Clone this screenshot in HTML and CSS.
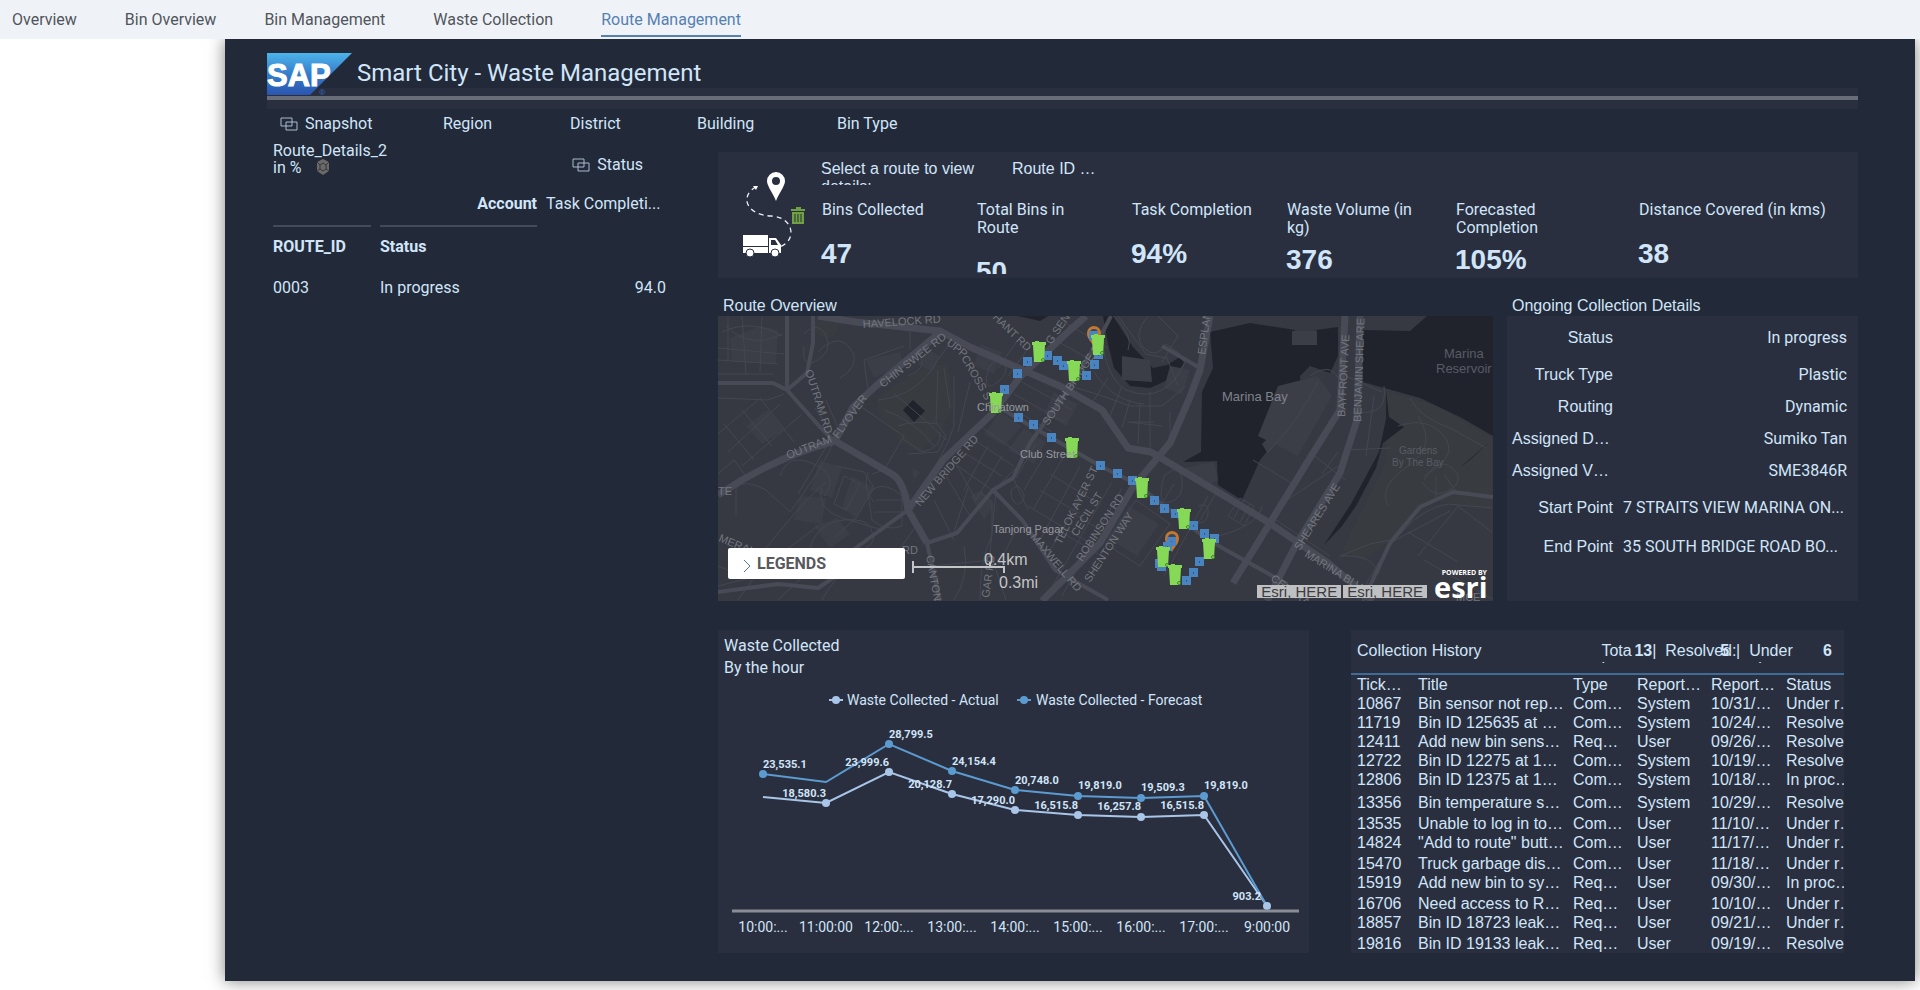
FILE: index.html
```html
<!DOCTYPE html>
<html lang="en">

<head>
    <meta charset="UTF-8">
    <title>Smart City - Waste Management</title>
    <link rel="stylesheet" href="styles.css">
</head>

<body>

    <nav class="tabs">
        <a href="#overview">Overview</a>
        <a href="#bin-overview">Bin Overview</a>
        <a href="#bin-management">Bin Management</a>
        <a href="#waste-collection">Waste Collection</a>
        <a href="#route-management" class="active">Route Management</a>
    </nav>

    <main class="board">

        <header class="board-header">
            <svg class="logo" viewBox="0 0 86 43" role="img" aria-label="SAP">
                <defs>
                    <linearGradient id="sapBlue" x1="0" y1="0" x2="0" y2="1">
                        <stop offset="0" stop-color="#4db4ea" />
                        <stop offset="0.5" stop-color="#357dcb" />
                        <stop offset="1" stop-color="#2a55b0" />
                    </linearGradient>
                </defs>
                <path d="M0 0H85L43 42H0z" fill="url(#sapBlue)" />
                <text class="logo-text" x="0" y="33">SAP</text>
                <text class="logo-mark" x="52" y="42">®</text>
            </svg>
            <h1>Smart City - Waste Management</h1>
        </header>

        <div class="filters">
            <button type="button">
                <svg class="link-icon" viewBox="0 0 18 14"><path d="M1 1h11v8H1zM6 5h11v8H6z" /></svg>Snapshot
            </button>
            <button type="button">Region</button>
            <button type="button">District</button>
            <button type="button">Building</button>
            <button type="button">Bin Type</button>
        </div>

        <div class="content">

            <section class="routes">
                <div class="routes-head">
                    <h2>Route_Details_2<br>in %
                        <svg class="cube-icon" viewBox="0 0 14 16">
                            <path d="M7 0l6 3v9l-6 4-6-4V3z" fill="#6b6a68" />
                            <path d="M7 4l3 2v4l-3 2-3-2V6zM1 3l3 3M13 3l-3 3M1 12l3-2M13 12l-3-2" fill="none" stroke="#34373f" />
                        </svg>
                    </h2>
                    <button type="button">
                        <svg class="link-icon" viewBox="0 0 18 14"><path d="M1 1h11v8H1zM6 5h11v8H6z" /></svg>Status
                    </button>
                </div>
                <table class="route-table">
                    <colgroup>
                        <col class="col-id">
                        <col class="col-status">
                        <col>
                    </colgroup>
                    <tr>
                        <th colspan="2" class="account">Account</th>
                        <td>Task Completi...</td>
                    </tr>
                    <tr class="ruled">
                        <th>ROUTE_ID</th>
                        <th>Status</th>
                        <td></td>
                    </tr>
                    <tr>
                        <td>0003</td>
                        <td>In progress</td>
                        <td class="num">94.0</td>
                    </tr>
                </table>
            </section>

            <div class="main-col">

                <section class="kpis">
                    <svg class="route-art" viewBox="0 0 70 94">
                        <path d="M17 18C1 26 6 46 32 47c24 1 26 26 8 31" fill="none" stroke="#eceef2" stroke-width="1.3" stroke-dasharray="5 4" />
                        <path d="M14 17l5 0-2 4z" fill="#fff" />
                        <path fill-rule="evenodd" fill="#fff" d="M37 3a9 9 0 0 1 9 9c0 5-6 12-9 20-3-8-9-15-9-20a9 9 0 0 1 9-9zm0 5a4 4 0 1 0 0 8 4 4 0 0 0 0-8z" />
                        <path fill="#6fa043" d="M52 40h5v-2h5v2h4v2H52zM53 43h12v12H53z" />
                        <path d="M56 45v8M59 45v8M62 45v8" stroke="#2a2f3f" />
                        <path fill="#fff" d="M4 66h25v11H4zM4 78h25v6H4zM30 69h7l5 7v8H30z" />
                        <path fill="#2a2f3f" d="M32 71h4l3 5h-7z" />
                        <circle cx="11" cy="84" r="4" fill="#fff" stroke="#2a2f3f" />
                        <circle cx="36" cy="84" r="4" fill="#fff" stroke="#2a2f3f" />
                    </svg>
                    <div class="kpi-body">
                        <div class="kpi-hint">
                            <p>Select a route to view details:</p>
                            <p>Route ID …</p>
                        </div>
                        <dl class="kpi-list">
                            <div class="kpi">
                                <dt>Bins Collected</dt>
                                <dd>47</dd>
                            </div>
                            <div class="kpi">
                                <dt>Total Bins in Route</dt>
                                <dd>50</dd>
                            </div>
                            <div class="kpi">
                                <dt>Task Completion</dt>
                                <dd>94%</dd>
                            </div>
                            <div class="kpi two-line">
                                <dt>Waste Volume (in kg)</dt>
                                <dd>376</dd>
                            </div>
                            <div class="kpi two-line">
                                <dt>Forecasted Completion</dt>
                                <dd>105%</dd>
                            </div>
                            <div class="kpi">
                                <dt>Distance Covered (in kms)</dt>
                                <dd>38</dd>
                            </div>
                        </dl>
                    </div>
                </section>

                <div class="map-row">
                    <section class="map-box">
                        <h2>Route Overview</h2>
                        <div class="map">
                            <svg class="map-svg" viewBox="0 0 775 285" preserveAspectRatio="xMidYMid slice">
                                <defs>
                                    <g id="bin">
                                        <path d="M-7-10h3v-1h4v1h7v3h-1l-1 17h-10l-1-17h-1z" fill="#86d957" />
                                        <circle cx="4" cy="8" r="1.5" fill="none" stroke="#3d8a2c" />
                                    </g>
                                    <g id="stop">
                                        <rect x="-5" y="-5" width="9" height="9" fill="#4a84c0" />
                                        <path d="M-1-1h1v2h-1z" fill="#2a5a96" />
                                    </g>
                                    <g id="pin">
                                        <path d="M0 13C-3 7-7 5-7-1a7 7 0 0 1 14 0c0 6-4 8-7 14z" fill="#c4772f" />
                                        <circle cy="-1" r="4" fill="#3c4657" />
                                    </g>
                                </defs>

                                <!-- parks -->
                                <path class="park" d="M160 80l48-30 22-2 6 40-14 30-20 18-20-10-22-30z" />
                                <circle class="park" cx="108" cy="10" r="12" />
                                <path class="park" d="M669 75l50 15 55 32v70l-60-8-40 40-30 20-20-10 20-40 25-50z" />

                                <!-- water -->
                                <path class="water" d="M492 16l40-9 45 7v15h21V14l22-3v29l-8 17-20-7-10 10 2 21-15 30-27 33-18 40-24-15-1-24-34 1 18-10 1-60 11-24z" />
                                <path class="water" d="M645 14l47 1 17-15h66v120l-33-19-40-19-57-16z" />
                                <path class="water" d="M385 0h10l20 31 20 21 14-3 13-8 4 6-10 14-24 11-20-2-16-18-6-24z" />
                                <path class="water" d="M300 0h30l-8 5zM668 75l3 26 15 10-21 16-7 25-20 38-14 20-18 19 27-41 28-52 7-33z" />
                                <path class="water" d="M774 124l-20 18-12 10 4-4 14-12z" />
                                <path class="water" d="M195 84l12 11-11 11-11-12z" />

                                <!-- blocks -->
                                <g class="block">
                                    <path d="M12 22l30-12 18 4-2 34-44-2zM102 144l22 8-10 30-22-8zM134 160l22 12-18 30-14-10zM262 28l22 8-8 22-20-8zM148 44l34-8 4 12-30 14z" />
                                    <path d="M282 96l22 14-18 20-20-12zM306 112l22 14-12 22-26-14zM336 76l24 12-12 22-22-12zM404 40l28 4 2 22-30-2zM452 50l20 4-8 24-18-6z" />
                                    <path d="M411 190l30 18-22 32-30-18zM96 210l24-8 12 16-20 14zM28 110l22-16 16 20-22 14zM252 180l12-6 12 16-10 14z" />
                                    <path d="M560 70l40-10 14 20-34 60-40-20zM574 15h25v14h-25zM544 128l8-8 8 6-10 12zM572 88l4-6 6 6-6 8z" />
                                    <path d="M466 152l30-6 4 18-14 8zM82 180l26 2-4 26-28-4zM194 152l8 4-6 8zM200 48l10-14 12 6-8 16z" />
                                </g>

                                <!-- minor streets -->
                                <g class="street">
                                    <path d="M0 32l66 6M0 58h56M0 82l50 2 16-6M10 0v44M24 0l4 58M44 0l-2 56M4 16q30-14 60 4M8 10q24 24 56 8M0 44l60 4" />
                                    <path d="M0 118l40-34M10 136l52-48M24 150l60-52M6 108l30 36M24 94l30 36M42 82l34 44M0 158l16-14 12 16" />
                                    <path d="M18 200v-28q8-10 30 2l24 22M72 196q30-40 44-70M48 232q40-50 60-66M80 178l30-50M104 172q-6 20 20 30l40 12" />
                                    <path d="M62 160q8-24 34-12t10 32M118 150l28 6 10 16-18 30-22 20M126 160l16 8-14 26-12-6z" />
                                    <path d="M92 232q8-26 34-28t28 12q6 14-16 20M60 240l40-30M20 284l24-34 40-6M60 284l30-28M104 284q20-40 60-34" />
                                    <path d="M150 178q14-16 34 2v30q-16 6-30-6zM158 184h26M156 196h28M150 156q-6 18 6 30M198 210l-24 34" />
                                    <path d="M142 90l44 30-20 34-12 4M117 122l-20-30M108 84l12 28M86 18q14-14 22 2t-12 26q-12 6-10-16M100 36q20-20 32-4t-10 30" />
                                    <path d="M146 44l4 30M146 44l40-14M190 60q20-8 12-20M192 16v18M160 84q40-4 60-40l10-14M166 94q30 10 50 36M220 54l-2 52 10 14-8 16-30 2" />
                                    <path d="M176 78q30 24 52 46M180 110q16-6 40-2M184 122l20 14q20-4 18-20M236 60v50q-10 30-32 60M226 52l6 40" />
                                    <path d="M252 66l-12 50M262 110l40 28M256 124l40 26M248 138l36 22M240 150l34 24M290 90l44 26M296 78l50 28M304 66l50 28M312 56l54 30" />
                                    <path d="M228 160l24 40M238 148l20 36M216 184l20 40M234 222l16-50M270 130l-24 44M284 140l-26 44M300 150l-20 20" />
                                    <path d="M262 176l12 10v34q-12 20-12 64M278 176l-6 60 16 48M296 164l14 30M246 230q6 30-10 54M214 250l60-6M300 210l-20 40" />
                                    <path d="M300 170q10 10 4 16t-10-4 6-12M272 50q8-10 14-2t-6 18-12-4zM318 128l-20 34M330 134l-24 40M346 140l-30 52M362 150l-40 74M376 160l-46 78" />
                                    <path d="M394 166l-64 112M404 172l-60 108M322 174l40 24M332 158l46 28M310 190l60 36M356 198l30 18M340 214l40 24" />
                                    <path d="M330 20l50 28M320 32l50 30M300 24l-20 28M312 30l-22 30M346 6l44 26M352 70q34 10 60 20h32l24-20M376 56q20 30 50 32" />
                                    <path d="M344 84l20-34M372 90l18-28M392 100l12-30M404 112l8-28M420 128l2-40M412 106h24M432 134V76M444 110l-34-4M452 126V96" />
                                    <path d="M384 22q4 40 24 52 40 16 60-30M448 40l12 30M400 0l28 38 20 4M430 0q-16 20-4 32t22-4l14 10M440 0l20 20-16 26M396 0q20 20 14 34" />
                                    <path d="M446 160q16-14 18 4t-12 22-6-26M418 184l34 24-30 42-34-22zM456 168l-16 26M500 174l-24 40M490 180l-44 80M480 190q12-4 10 8t-14 8" />
                                    <path d="M535 144l40 24M597 140l30 24M620 136l-16 22M552 200l60 40M560 190l60-40M628 134l44-2M536 190l-14-8-12 18 16 10 10-20M526 184l-10 18M532 188l-10 18M500 220q40-10 44-30" />
                                    <path d="M592 60q20-14 28 2M640 96q30 4 26-26M628 60l36 16M600 66q-20 40-50 70M656 80l-8 60M706 164q14-24 28-12t-2 22-28-8M726 158l12 18M718 160v24" />
                                    <path d="M622 240l30-12 20-4-12 34q-4-20-38-18M672 227l60-32M700 240l40-50 34 26M706 244l70 40M640 284q44-90 90-96l44 4M690 216l50 30" />
                                    <path d="M0 270l40-10M0 250l30 12M700 100q20 30-10 50t-20 40M680 110q30-10 46 10t-20 40M692 82q10 20 40 30l36 20" />
                                </g>

                                <!-- main roads -->
                                <g class="road">
                                    <path d="M69 0v74l33 37 15 15M95 0v27l-6 30-20 17M0 67h55l14 7" />
                                    <path d="M209 227l30-10 36-43 20-12 17-35 40-56 27-44 14-27M275 174l30 31 32 49 53 30" />
                                    <path d="M280 91l104 60 33 16 73 57 79 44M209 227l13 58M190 194l-51 37-40 30M0 276l60-8 40 4 30-20" />
                                    <path d="M444 30l38 22M672 227l-27 58M775 181l-40-5-33 15-30 36" />
                                </g>
                                <g class="road wide">
                                    <path d="M100 0l38 6 84 9 30 16 92 40 40 23 26 38 23 4 117 70 60 41 45 38" />
                                    <path d="M225 14l-66 55-24 22-18 34q-60 16-117 54" />
                                    <path d="M117 125l55 32q14 6 18 37l19 33M190 194l35-50 50-47 27-36 50-47 16-14" />
                                    <path d="M492 0l-10 54-10 27-20 46-37 44-33 56-58 58" />
                                    <path d="M642 0l-3 104-17 53-43 70-30 58M627 0l-5 94-27 43-43 70-37 60" />
                                </g>

                                <!-- street names -->
                                <g class="street-name">
                                    <text transform="translate(145 12) rotate(-4)">HAVELOCK RD</text>
                                    <text transform="translate(165 72) rotate(-38)">CHIN SWEE RD</text>
                                    <text transform="translate(87 55) rotate(72)">OUTRAM RD</text>
                                    <text transform="translate(70 143) rotate(-21)">OUTRAM</text>
                                    <text transform="translate(120 123) rotate(-54)">FLYOVER</text>
                                    <text transform="translate(202 191) rotate(-49)">NEW BRIDGE RD</text>
                                    <text transform="translate(228 28) rotate(38)">UPP</text>
                                    <text transform="translate(243 42) rotate(60)">CROSS ST</text>
                                    <text transform="translate(274 2) rotate(44)">HANT RD</text>
                                    <text transform="translate(333 29) rotate(-55)">G SENG</text>
                                    <text transform="translate(330 110) rotate(-56)">SOUTH BRIDGE RD</text>
                                    <text transform="translate(343 229) rotate(-64)">TELOK AYER ST</text>
                                    <text transform="translate(359 221) rotate(-58)">CECIL ST</text>
                                    <text transform="translate(364 246) rotate(-57)">ROBINSON RD</text>
                                    <text transform="translate(372 267) rotate(-57)">SHENTON WAY</text>
                                    <text transform="translate(312 221) rotate(50)">MAXWELL RD</text>
                                    <text transform="translate(208 240) rotate(80)">CANTON</text>
                                    <text transform="translate(271 282) rotate(-82)">GAR RD</text>
                                    <text transform="translate(0 225) rotate(22)">MERAH</text>
                                    <text x="184" y="238">RD</text>
                                    <text x="0" y="179">TE</text>
                                    <text transform="translate(487 39) rotate(-82)">ESPLAN</text>
                                    <text transform="translate(627 101) rotate(-87)">BAYFRONT AVE</text>
                                    <text transform="translate(643 106) rotate(-88)">BENJAMIN SHEARE</text>
                                    <text transform="translate(582 235) rotate(-58)">SHEARES AVE</text>
                                    <text transform="translate(586 240) rotate(32)">MARINA BLV</text>
                                    <text transform="translate(552 264) rotate(36)">CENTRAL</text>
                                    <text x="738" y="285">MCE</text>
                                </g>
                                <g class="water-name">
                                    <text x="504" y="85">Marina Bay</text>
                                    <text class="faint" x="726" y="42">Marina</text>
                                    <text class="faint" x="718" y="57">Reservoir</text>
                                    <text class="faint small" x="681" y="138">Gardens</text>
                                    <text class="faint small" x="674" y="150">By The Bay</text>
                                </g>

                                <!-- route -->
                                <use href="#pin" x="376" y="18" />
                                <use href="#pin" x="454" y="223" />
                                <use href="#stop" x="330" y="40" />
                                <use href="#stop" x="310" y="46" />
                                <use href="#stop" x="300" y="58" />
                                <use href="#stop" x="287" y="74" />
                                <use href="#stop" x="340" y="45" />
                                <use href="#stop" x="346" y="50" />
                                <use href="#stop" x="369" y="60" />
                                <use href="#stop" x="377" y="49" />
                                <use href="#stop" x="381" y="39" />
                                <use href="#stop" x="376" y="20" />
                                <use href="#stop" x="301" y="102" />
                                <use href="#stop" x="316" y="109" />
                                <use href="#stop" x="334" y="122" />
                                <use href="#stop" x="383" y="150" />
                                <use href="#stop" x="400" y="158" />
                                <use href="#stop" x="415" y="165" />
                                <use href="#stop" x="437" y="185" />
                                <use href="#stop" x="447" y="193" />
                                <use href="#stop" x="458" y="198" />
                                <use href="#stop" x="476" y="210" />
                                <use href="#stop" x="487" y="218" />
                                <use href="#stop" x="497" y="223" />
                                <use href="#stop" x="482" y="246" />
                                <use href="#stop" x="476" y="257" />
                                <use href="#stop" x="469" y="265" />
                                <use href="#stop" x="444" y="251" />
                                <use href="#stop" x="442" y="248" />
                                <use href="#stop" x="454" y="226" />
                                <use href="#stop" x="450" y="231" />
                                <use href="#bin" x="321" y="36" />
                                <use href="#bin" x="356" y="55" />
                                <use href="#bin" x="380" y="29" />
                                <use href="#bin" x="278" y="87" />
                                <use href="#bin" x="354" y="132" />
                                <use href="#bin" x="424" y="172" />
                                <use href="#bin" x="466" y="203" />
                                <use href="#bin" x="491" y="233" />
                                <use href="#bin" x="445" y="241" />
                                <use href="#bin" x="457" y="259" />

                                <g class="place-name">
                                    <text x="259" y="95">Chinatown</text>
                                    <text x="302" y="142">Club Street</text>
                                    <text x="275" y="217">Tanjong Pagar</text>
                                </g>

                                <path class="scale-line" d="M195 245v12M195 251h91v6M272 251v-5" />
                                <text class="scale-text" x="266" y="249">0.4km</text>
                                <text class="scale-text" x="281" y="272">0.3mi</text>
                            </svg>
                            <button type="button" class="legends">
                                <svg viewBox="0 0 8 14"><path d="M1 1l6 6-6 6" /></svg>LEGENDS
                            </button>
                            <div class="credits">
                                <span class="sources"><a href="#esri">Esri, HERE</a><a href="#here">Esri, HERE</a></span>
                                <span class="esri"><small>POWERED BY</small>esri</span>
                            </div>
                        </div>
                    </section>

                    <section class="details">
                        <h2>Ongoing Collection Details</h2>
                        <dl>
                            <dt>Status</dt>
                            <dd>In progress</dd>
                            <dt>Truck Type</dt>
                            <dd>Plastic</dd>
                            <dt>Routing</dt>
                            <dd>Dynamic</dd>
                            <dt class="cut">Assigned D…</dt>
                            <dd>Sumiko Tan</dd>
                            <dt class="cut">Assigned V…</dt>
                            <dd>SME3846R</dd>
                            <dt>Start Point</dt>
                            <dd class="cut">7 STRAITS VIEW MARINA ON...</dd>
                            <dt>End Point</dt>
                            <dd class="cut">35 SOUTH BRIDGE ROAD BO...</dd>
                        </dl>
                    </section>
                </div>

                <div class="bottom-row">
                    <section class="chart">
                        <h2>Waste Collected</h2>
                        <p>By the hour</p>
                        <svg class="chart-svg" viewBox="0 0 591 270">
                            <g class="legend">
                                <path class="actual" d="M111 18h14" />
                                <circle class="actual-dot" cx="118" cy="18" r="4" />
                                <text x="129" y="23">Waste Collected - Actual</text>
                                <path class="forecast" d="M299 18h14" />
                                <circle class="forecast-dot" cx="306" cy="18" r="4" />
                                <text x="318" y="23">Waste Collected - Forecast</text>
                            </g>

                            <polyline class="actual" points="45,115 108,121 171,90 234,112 297,128 360,133 423,135 486,133 549,224" />
                            <polyline class="forecast" points="45,92 108,100 171,62 234,89 297,108 360,114 423,116 486,114 549,224" />

                            <g class="forecast-dot">
                                <circle cx="45" cy="92" r="4" />
                                <circle cx="171" cy="62" r="4" />
                                <circle cx="234" cy="89" r="4" />
                                <circle cx="297" cy="108" r="4" />
                                <circle cx="360" cy="114" r="4" />
                                <circle cx="423" cy="116" r="4" />
                                <circle cx="486" cy="114" r="4" />
                            </g>
                            <g class="actual-dot">
                                <circle cx="108" cy="121" r="4" />
                                <circle cx="171" cy="90" r="4" />
                                <circle cx="234" cy="112" r="4" />
                                <circle cx="297" cy="128" r="4" />
                                <circle cx="360" cy="133" r="4" />
                                <circle cx="423" cy="135" r="4" />
                                <circle cx="486" cy="133" r="4" />
                                <circle cx="549" cy="224" r="4" />
                            </g>

                            <g class="values">
                                <text x="45" y="86">23,535.1</text>
                                <text x="171" y="56">28,799.5</text>
                                <text x="234" y="83">24,154.4</text>
                                <text x="297" y="102">20,748.0</text>
                                <text x="360" y="107">19,819.0</text>
                                <text x="423" y="109">19,509.3</text>
                                <text x="486" y="107">19,819.0</text>
                            </g>
                            <g class="values end">
                                <text x="108" y="115">18,580.3</text>
                                <text x="171" y="84">23,999.6</text>
                                <text x="234" y="106">20,128.7</text>
                                <text x="297" y="122">17,290.0</text>
                                <text x="360" y="127">16,515.8</text>
                                <text x="423" y="128">16,257.8</text>
                                <text x="486" y="127">16,515.8</text>
                                <text x="543" y="218">903.2</text>
                            </g>

                            <path class="axis" d="M14 229h567" />
                            <g class="hours">
                                <text x="45" y="250">10:00:...</text>
                                <text x="108" y="250">11:00:00</text>
                                <text x="171" y="250">12:00:...</text>
                                <text x="234" y="250">13:00:...</text>
                                <text x="297" y="250">14:00:...</text>
                                <text x="360" y="250">15:00:...</text>
                                <text x="423" y="250">16:00:...</text>
                                <text x="486" y="250">17:00:...</text>
                                <text x="549" y="250">9:00:00</text>
                            </g>
                        </svg>
                    </section>

                    <section class="history">
                        <div class="history-head">
                            <h2>Collection History</h2>
                            <p class="total">Total:</p>
                            <b>13</b>
                            <p class="resolved">|&nbsp; Resolved:</p>
                            <b class="over">5</b>
                            <p class="under">|&nbsp; Under review:</p>
                            <b>6</b>
                        </div>
                        <table class="history-table">
                            <colgroup>
                                <col class="col-ticket">
                                <col class="col-title">
                                <col class="col-type">
                                <col class="col-by">
                                <col class="col-on">
                                <col>
                            </colgroup>
                            <thead>
                                <tr><th>Tick…</th><th>Title</th><th>Type</th><th>Report…</th><th>Report…</th><th>Status</th></tr>
                            </thead>
                            <tbody>
                                <tr><td>10867</td><td>Bin sensor not rep…</td><td>Com…</td><td>System</td><td>10/31/…</td><td>Under r…</td></tr>
                                <tr><td>11719</td><td>Bin ID 125635 at …</td><td>Com…</td><td>System</td><td>10/24/…</td><td>Resolved</td></tr>
                                <tr><td>12411</td><td>Add new bin sens…</td><td>Req…</td><td>User</td><td>09/26/…</td><td>Resolved</td></tr>
                                <tr><td>12722</td><td>Bin ID 12275 at 1…</td><td>Com…</td><td>System</td><td>10/19/…</td><td>Resolved</td></tr>
                                <tr><td>12806</td><td>Bin ID 12375 at 1…</td><td>Com…</td><td>System</td><td>10/18/…</td><td>In proc…</td></tr>
                                <tr class="gap"><td>13356</td><td>Bin temperature s…</td><td>Com…</td><td>System</td><td>10/29/…</td><td>Resolved</td></tr>
                                <tr class="tall"><td>13535</td><td>Unable to log in to…</td><td>Com…</td><td>User</td><td>11/10/…</td><td>Under r…</td></tr>
                                <tr><td>14824</td><td>"Add to route" butt…</td><td>Com…</td><td>User</td><td>11/17/…</td><td>Under r…</td></tr>
                                <tr class="tall"><td>15470</td><td>Truck garbage dis…</td><td>Com…</td><td>User</td><td>11/18/…</td><td>Under r…</td></tr>
                                <tr><td>15919</td><td>Add new bin to sy…</td><td>Req…</td><td>User</td><td>09/30/…</td><td>In proc…</td></tr>
                                <tr class="tall"><td>16706</td><td>Need access to R…</td><td>Req…</td><td>User</td><td>10/10/…</td><td>Under r…</td></tr>
                                <tr><td>18857</td><td>Bin ID 18723 leak…</td><td>Req…</td><td>User</td><td>09/21/…</td><td>Under r…</td></tr>
                                <tr class="tall"><td>19816</td><td>Bin ID 19133 leak…</td><td>Req…</td><td>User</td><td>09/19/…</td><td>Resolved</td></tr>
                            </tbody>
                        </table>
                    </section>
                </div>

            </div>
        </div>
    </main>

</body>

</html>
```
FILE: styles.css
```css
* {
    box-sizing: border-box;
}

body {
    margin: 0;
    padding-bottom: 9px;
    background: #fff;
    color: #d1e5f9;
    font-family: Roboto, "Liberation Sans", sans-serif;
    font-size: 16px;
    line-height: 18px;
}

h1,
h2,
p,
dl,
dt,
dd {
    margin: 0;
    font-size: 16px;
    font-weight: normal;
}

button {
    padding: 0;
    border: none;
    background: none;
    color: inherit;
    font: inherit;
    cursor: pointer;
}

/* top tabs */
.tabs {
    display: flex;
    gap: 48px;
    height: 39px;
    padding-left: 12px;
    background: #eff3f8;
}

    .tabs a {
        height: 37px;
        color: #51555b;
        line-height: 40px;
        text-decoration: none;
    }

    .tabs a.active {
        border-bottom: 2px solid #5580b0;
        color: #5580b0;
    }

/* dashboard */
.board {
    margin: 0 5px 0 225px;
    padding: 14px 57px 28px 42px;
    background: #222938;
    box-shadow: 0 0 16px rgba(0, 0, 0, 0.5);
    clip-path: inset(0 -30px -30px -30px);
}

.board-header {
    display: flex;
    gap: 4px;
    height: 56px;
    background: linear-gradient(#222938 35px, #2a2f3f 35px, #2a2f3f 43px, #696d78 43px, #696d78 47px, #2a2f3f 47px);
}

    .board-header h1 {
        font-size: 24px;
        line-height: 40px;
    }

.logo {
    width: 86px;
    height: 43px;
}

.logo-text {
    fill: #fff;
    stroke: #fff;
    font: bold 31px "Liberation Sans", sans-serif;
}

.logo-mark {
    fill: #2f5fb8;
    font-size: 8px;
}

.filters {
    display: grid;
    grid-template-columns: 163px 127px 127px 140px auto;
    justify-content: start;
    height: 43px;
    padding: 6px 0 0 13px;
}

    .filters button {
        height: 18px;
        text-align: left;
    }

.link-icon {
    width: 18px;
    height: 14px;
    margin-right: 7px;
    vertical-align: -2px;
}

    .link-icon path {
        fill: none;
        stroke: #a9bccf;
    }

.content {
    display: grid;
    grid-template-columns: 451px minmax(0, 1fr);
}

/* routes table */
.routes {
    padding-left: 6px;
}

.routes-head {
    display: flex;
    justify-content: space-between;
    height: 31px;
    padding-right: 75px;
}

    .routes-head h2 {
        margin-top: -9px;
        line-height: 16px;
    }

    .routes-head button {
        height: 26px;
    }

.cube-icon {
    width: 14px;
    height: 16px;
    margin-left: 11px;
    vertical-align: -2px;
}

.route-table {
    width: 411px;
    margin-left: -9px;
    table-layout: fixed;
    border-spacing: 9px 0;
}

    .route-table th,
    .route-table td {
        height: 42px;
        padding: 0;
        text-align: left;
    }

    .route-table .account,
    .route-table .num {
        text-align: right;
    }

    .route-table .ruled th {
        border-top: 2px solid #434b5a;
    }

.col-id {
    width: 98px;
}

.col-status {
    width: 157px;
}

/* key figures */
.kpis {
    display: flex;
    gap: 12px;
    height: 126px;
    padding: 8px 0 0 21px;
    background: #2a2f3f;
}

.route-art {
    flex: none;
    width: 70px;
    height: 94px;
    margin-top: 9px;
}

.kpi-body {
    flex: 1;
}

.kpi-hint {
    display: flex;
    gap: 31px;
    height: 25px;
    overflow: hidden;
    font-family: "Liberation Sans", sans-serif;
}

    .kpi-hint p:first-child {
        width: 160px;
    }

.kpi-list {
    display: grid;
    grid-template-columns: 155fr 155fr 155fr 169fr 183fr 220fr;
    height: 89px;
    padding-top: 16px;
    overflow: hidden;
}

.kpi {
    padding-left: 1px;
    overflow: hidden;
}

    .kpi dt {
        max-width: 125px;
    }

    .kpi:last-child dt {
        max-width: none;
    }

    .kpi dd {
        margin: 19px 0 0 -1px;
        font: bold 28px/32px "Liberation Sans", sans-serif;
    }

    .kpi.two-line dd {
        margin-top: 7px;
    }

/* map */
.map-row {
    display: grid;
    grid-template-columns: minmax(0, 1fr) 351px;
    gap: 14px;
    margin-top: 18px;
}

    .map-row h2 {
        height: 20px;
        padding-left: 5px;
        font-family: "Liberation Sans", sans-serif;
        line-height: 20px;
    }

.map {
    position: relative;
    height: 285px;
    overflow: hidden;
    background: #363941;
}

.map-svg {
    display: block;
    width: 100%;
    height: 100%;
    font-family: "Liberation Sans", sans-serif;
}

.park {
    fill: #383b40;
}

.water {
    fill: #20232c;
}

.block {
    fill: #3b3e47;
}

.street,
.road {
    fill: none;
    stroke: #444751;
    stroke-linejoin: round;
}

.road {
    stroke: #484b55;
    stroke-width: 4;
}

    .road.wide {
        stroke-width: 7;
    }

.street-name {
    fill: #73767e;
    font-size: 11px;
}

.water-name {
    fill: #7f828a;
    font-size: 13px;
}

    .water-name .faint {
        fill: #585b64;
    }

    .water-name .small {
        font-size: 10px;
    }

.place-name {
    fill: #989aa0;
    font-size: 11px;
}

.scale-line {
    fill: none;
    stroke: #c4c5c8;
    stroke-width: 2;
}

.scale-text {
    fill: #c4c5c8;
    font-size: 16px;
}

.legends {
    position: absolute;
    left: 10px;
    bottom: 22px;
    width: 177px;
    height: 31px;
    padding-left: 15px;
    border-radius: 2px;
    background: #fff;
    color: #58595c;
    font-weight: bold;
    text-align: left;
}

    .legends svg {
        width: 8px;
        height: 14px;
        margin-right: 6px;
        vertical-align: -4px;
    }

    .legends path {
        fill: none;
        stroke: #4a78ae;
    }

.credits {
    position: absolute;
    right: 6px;
    bottom: 3px;
    display: flex;
    align-items: flex-end;
    gap: 7px;
}

.sources {
    display: flex;
    gap: 2px;
    font: 15px/13px "Liberation Sans", sans-serif;
}

    .sources a {
        padding: 0 4px;
        background: #bfc0c2;
        color: #3a3c42;
        text-decoration: none;
    }

.esri {
    width: 53px;
    color: #fff;
    font: bold 29px/22px "Open Sans", sans-serif;
    text-align: right;
}

    .esri small {
        display: block;
        font-size: 7px;
        line-height: 6px;
    }

/* collection details */
.details dl {
    display: grid;
    grid-template-columns: 106px minmax(0, 1fr);
    grid-template-rows: 43px 32px 32px 32px 32px 42px 36px;
    column-gap: 10px;
    align-items: center;
    height: 285px;
    padding-right: 11px;
    background: #2a2f3f;
    text-align: right;
    white-space: nowrap;
}

.details dt {
    font-family: "Liberation Sans", sans-serif;
}

.details .cut {
    padding-left: 5px;
    text-align: left;
}

.details dd.cut {
    padding-left: 0;
}

/* waste chart */
.bottom-row {
    display: grid;
    grid-template-columns: 591fr 493fr;
    gap: 42px;
    margin: 29px 14px 0 0;
}

.chart {
    height: 323px;
    padding-top: 5px;
    background: #2a2f3f;
}

    .chart h2,
    .chart p {
        padding-left: 6px;
        line-height: 22px;
    }

    .chart p {
        margin-bottom: 3px;
    }

.chart-svg {
    display: block;
    width: 100%;
    fill: #d1e5f9;
    font-size: 14px;
}

.actual,
.forecast {
    fill: none;
    stroke: #a9c6e8;
    stroke-width: 2;
}

.forecast {
    stroke: #5b9bd0;
}

.actual-dot {
    fill: #a9c6e8;
}

.forecast-dot {
    fill: #5b9bd0;
}

.values {
    font-size: 11px;
    font-weight: bold;
}

.end {
    text-anchor: end;
}

.axis {
    stroke: #8a8c95;
    stroke-width: 3;
}

.hours {
    text-anchor: middle;
}

/* ticket history */
.history {
    height: 323px;
    overflow: hidden;
    background: #2a2f3f;
    font-family: "Liberation Sans", sans-serif;
}

.history-head {
    display: flex;
    height: 45px;
    padding: 12px 12px 0 6px;
    border-bottom: 2px solid #3f6c97;
}

    .history-head p {
        height: 21px;
        overflow: hidden;
        white-space: nowrap;
    }

    .history-head h2 {
        flex: 1;
    }

    .history-head .total {
        width: 33px;
        white-space: normal;
        word-break: break-all;
    }

    .history-head .resolved {
        width: 84px;
    }

    .history-head .over {
        margin-left: -16px;
    }

    .history-head .under {
        width: 87px;
        margin-left: 7px;
        white-space: normal;
    }

.history-table {
    width: 100%;
    table-layout: fixed;
    border-collapse: collapse;
}

    .history-table th,
    .history-table td {
        height: 19px;
        padding: 0 0 0 6px;
        font-weight: normal;
        line-height: 19px;
        text-align: left;
        vertical-align: bottom;
        white-space: nowrap;
    }

    .history-table .tall td {
        height: 21px;
    }

    .history-table .gap td {
        height: 23px;
    }

.col-ticket {
    width: 61px;
}

.col-title {
    width: 155px;
}

.col-type {
    width: 64px;
}

.col-by {
    width: 74px;
}

.col-on {
    width: 75px;
}
```
